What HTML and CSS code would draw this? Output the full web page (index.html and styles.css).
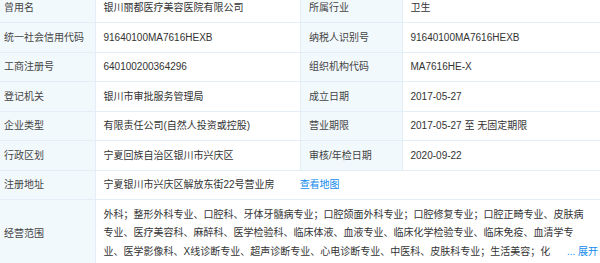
FILE: index.html
```html
<!DOCTYPE html>
<html lang="zh-CN">
<head>
<meta charset="utf-8">
<title>工商信息</title>
<link rel="stylesheet" href="styles.css">
</head>
<body>
<div class="info-table">
  <div class="cell label">曾用名</div>
  <div class="cell value">银川丽都医疗美容医院有限公司</div>
  <div class="cell label">所属行业</div>
  <div class="cell value">卫生</div>

  <div class="cell label">统一社会信用代码</div>
  <div class="cell value">91640100MA7616HEXB</div>
  <div class="cell label">纳税人识别号</div>
  <div class="cell value">91640100MA7616HEXB</div>

  <div class="cell label">工商注册号</div>
  <div class="cell value">640100200364296</div>
  <div class="cell label">组织机构代码</div>
  <div class="cell value">MA7616HE-X</div>

  <div class="cell label">登记机关</div>
  <div class="cell value">银川市审批服务管理局</div>
  <div class="cell label">成立日期</div>
  <div class="cell value">2017-05-27</div>

  <div class="cell label">企业类型</div>
  <div class="cell value">有限责任公司(自然人投资或控股)</div>
  <div class="cell label">营业期限</div>
  <div class="cell value">2017-05-27 至 无固定期限</div>

  <div class="cell label">行政区划</div>
  <div class="cell value">宁夏回族自治区银川市兴庆区</div>
  <div class="cell label">审核/年检日期</div>
  <div class="cell value">2020-09-22</div>

  <div class="cell label">注册地址</div>
  <div class="cell value wide">宁夏银川市兴庆区解放东街22号营业房<a class="link map-link">查看地图</a></div>

  <div class="cell label">经营范围</div>
  <div class="cell value wide scope">
    <div class="scope-text"><a class="link more">... 展开</a>外科；整形外科专业、口腔科、牙体牙髓病专业；口腔颌面外科专业；口腔修复专业；口腔正畸专业、皮肤病专业、医疗美容科、麻醉科、医学检验科、临床体液、血液专业、临床化学检验专业、临床免疫、血清学专业、医学影像科、X线诊断专业、超声诊断专业、心电诊断专业、中医科、皮肤科专业；生活美容；化</div>
  </div>
</div>
</body>
</html>
```

FILE: styles.css
```css
html, body {
  margin: 0;
  padding: 0;
  overflow: hidden;
  background: #fff;
}

body {
  font-family: "Liberation Sans", "Noto Sans CJK SC", sans-serif;
  font-size: 10px;
  color: #333;
}

.info-table {
  display: grid;
  grid-template-columns: 100px 205px 102px 203px;
  width: 610px;
  margin-left: -5px;
  margin-top: -7.5px;
  border-top: 1px solid #e4eef6;
  border-left: 1px solid #e4eef6;
}

.cell {
  box-sizing: border-box;
  padding: 5.5px 8px;
  line-height: 17.5px;
  border-right: 1px solid #e4eef6;
  border-bottom: 1px solid #e4eef6;
  white-space: nowrap;
  display: flex;
  align-items: center;
}

.label {
  background: #f2f9fc;
  color: #444;
}

.value {
  color: #333;
  padding-left: 7.5px;
}

.wide {
  grid-column: span 3;
}

.link {
  color: #128bed;
  cursor: pointer;
}

.map-link {
  margin-left: 25px;
}

.scope {
  display: block;
  white-space: normal;
  padding: 5.5px 7px 5.5px 7.5px;
}

.scope-text {
  line-height: 18.5px;
  height: 55.5px;
  padding-right: 10px;
  line-break: strict;
}

.scope-text::before {
  content: "";
  float: right;
  width: 0;
  height: 37px;
}

.more {
  float: right;
  clear: both;
  margin-right: -10px;
  padding-left: 8px;
}
```
